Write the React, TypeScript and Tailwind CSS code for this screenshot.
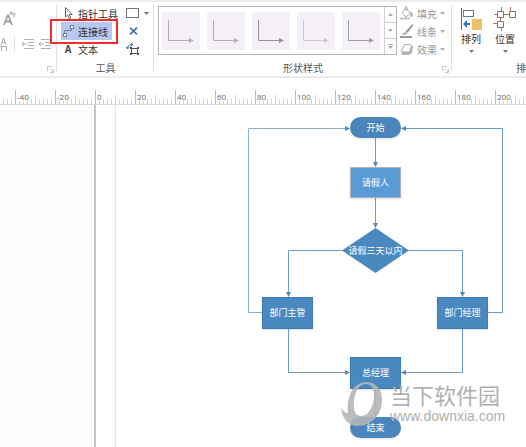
import React from 'react'

interface FlowNode {
  id: string
  label: string
  place: string
}

const nodes: FlowNode[] = [
  { id: 'start', label: '开始', place: 'left-[350px] top-[12px] h-[21px] w-[51px] rounded-full bg-[#4a86bb]' },
  { id: 'applicant', label: '请假人', place: 'left-[350px] top-[62px] h-[31px] w-[51px] border border-[#a9b4bf] bg-[#5b9bd5]' },
  { id: 'director', label: '部门主管', place: 'left-[262px] top-[192px] h-[32px] w-[51px] border border-[#4079ad] bg-[#4a89c0]' },
  { id: 'manager', label: '部门经理', place: 'left-[437px] top-[192px] h-[32px] w-[51px] border border-[#4079ad] bg-[#4a89c0]' },
  { id: 'general', label: '总经理', place: 'left-[350px] top-[252px] h-[32px] w-[51px] border border-[#4079ad] bg-[#4a89c0]' },
  { id: 'end', label: '结束', place: 'left-[350px] top-[312px] h-[21px] w-[51px] rounded-full bg-[#4a86bb]' },
]

const rulerMarks = [-40, -20, 0, 20, 40, 60, 80, 100, 120, 140, 160, 180, 200, 220, 240, 260, 280, 300]

const gallery = [
  { id: 1, stroke: '#b3adb6' },
  { id: 2, stroke: '#b3adb6' },
  { id: 3, stroke: '#96909a' },
  { id: 4, stroke: '#cfc8d2' },
  { id: 5, stroke: '#a39da7' },
]

function Caret({ color = '#777' }: { color?: string }) {
  return (
    <svg width="5" height="3" viewBox="0 0 5 3" className="shrink-0">
      <path d="M0 0h5L2.5 3z" fill={color} />
    </svg>
  )
}

function Launcher() {
  return (
    <button aria-label="更多选项" className="absolute right-[3px] bottom-[3px]">
      <svg width="7" height="7" viewBox="0 0 7 7" fill="none" stroke="#c4c4c4">
        <path d="M.5 5V.5H5M3 3l3 3M6.5 3v3.5H3" />
      </svg>
    </button>
  )
}

function PointerIcon() {
  return (
    <svg width="14" height="14" viewBox="0 0 14 14" fill="#fff" stroke="#666">
      <path d="M4.500 1.500v9.500l2.200-2 1.600 3.700 1.500-.7-1.600-3.500h3z" />
    </svg>
  )
}

function ConnectorIcon() {
  return (
    <svg width="14" height="14" viewBox="0 0 14 14" fill="none" stroke="#6880a8">
      <path d="M3.500 9.500V6.500H10.500V4.500" />
      <rect x="2.500" y="9.500" width="3" height="3" fill="#fff" />
      <rect x="9.500" y="1.500" width="3" height="3" fill="#fff" />
    </svg>
  )
}

function RibbonGroup({ width, label, children }: { width: string; label: string; children: React.ReactNode }) {
  return (
    <section className={`relative flex shrink-0 flex-col ${width}`}>
      <div className="flex h-[58px]">{children}</div>
      <p className="text-center text-[10px] leading-4 text-[#555]">{label}</p>
      <span className="absolute top-[3px] right-0 h-[66px] w-px bg-[#e1e1e1]" />
    </section>
  )
}

function FontGroup() {
  return (
    <RibbonGroup width="w-[57px]" label="">
      <div className="flex flex-col gap-[10px] pt-2">
        <button aria-label="旋转文字" className="pl-[3px]">
          <svg width="14" height="16" viewBox="0 0 14 16" fill="none" stroke="#a0a0a0" strokeWidth="1.800">
            <path d="M1 15l3.600-9.500h.8L9 15M2.500 11.500h5" />
            <path d="M7 3.500c3-1.500 4.500 0 4 4M8 1.500l-1 2 2.500 1.500M9.500 2.500l3 2" strokeWidth="1" />
          </svg>
        </button>
        <div className="flex items-center">
          <button aria-label="字符边框">
            <svg width="8" height="14" viewBox="0 0 8 14" fill="none" stroke="#aaa">
              <path d="M1 8l2.500-7L6 8M2 5.500h3M0 9.500h7M1.500 9v5M6.500 9v5" />
            </svg>
          </button>
          <span className="ml-[6px] h-4 w-px bg-[#dcdcdc]" />
          <button aria-label="减少缩进" className="ml-[6px]">
            <svg width="13" height="10" viewBox="0 0 13 10" fill="none" stroke="#b0b0b0">
              <path d="M3 .5h10M7 3.500h6M7 6.500h6M3 9.500h10M6 5H1M3 3L1 5l2 2" />
            </svg>
          </button>
          <button aria-label="增加缩进" className="ml-[4px]">
            <svg width="13" height="10" viewBox="0 0 13 10" fill="none" stroke="#b0b0b0">
              <path d="M3 .5h10M7 3.500h6M7 6.500h6M3 9.500h10M1 5h5M3 3L1 5l2 2" />
            </svg>
          </button>
        </div>
      </div>
      <Launcher />
    </RibbonGroup>
  )
}

function ToolGroup() {
  return (
    <RibbonGroup width="w-[97px]" label="工具">
      <div className="flex flex-col items-start pt-[2px] pl-1 text-[10px] text-[#333]">
        <button className="flex h-[18px] items-center gap-[3px]">
          <PointerIcon />
          指针工具
        </button>
        <div className="relative">
          <button aria-pressed="true" className="flex h-[18px] w-[51px] items-center gap-[3px] bg-[#b9c6f0]">
            <ConnectorIcon />
            连接线
          </button>
          <span className="pointer-events-none absolute -top-[3px] -right-[6px] -bottom-[4px] -left-[11px] border-2 border-[#f02c2c]" />
        </div>
        <button className="flex h-[18px] items-center gap-[3px]">
          <span className="w-[14px] text-center font-['Liberation_Sans'] font-bold text-[#444]">A</span>
          文本
        </button>
      </div>
      <div className="flex flex-col items-start pt-[2px] pl-2">
        <button aria-label="矩形" className="flex h-[18px] items-center gap-1">
          <svg width="14" height="12" viewBox="0 0 14 12" fill="none" stroke="#777">
            <rect x=".5" y="1.500" width="12" height="9" />
          </svg>
          <Caret />
        </button>
        <button aria-label="连接点" className="flex h-[18px] w-[14px] items-center justify-center">
          <svg width="9" height="8" viewBox="0 0 9 8" fill="none" stroke="#3b6ea8" strokeWidth="1.600">
            <path d="M1 .7l7 6.600M8 .7L1 7.300" />
          </svg>
        </button>
        <button aria-label="文本块" className="flex h-[18px] items-center">
          <svg width="14" height="14" viewBox="0 0 14 14" fill="none">
            <path d="M1.500 7c0-3 1.500-4.500 5-4.500M4.500.5l2.500 2-2.500 2M0 5l1.500 2L3.500 5" stroke="#3b6ea8" />
            <rect x="5.500" y="6.500" width="6" height="5" stroke="#555" />
            <path d="M4 5h2v2H4zM11 5h2v2h-2zM4 11h2v2H4zM11 11h2v2h-2z" fill="#555" />
          </svg>
        </button>
      </div>
    </RibbonGroup>
  )
}

function StyleGroup() {
  return (
    <RibbonGroup width="w-[298px]" label="形状样式">
      <div className="mt-1 ml-1 flex h-[49px] w-[239px] shrink-0 items-stretch border border-[#b4b4b4]">
        <div className="flex flex-1 items-center gap-[7px] pl-[3px]">
          {gallery.map((item) => (
            <button key={item.id} aria-label={`样式 ${item.id}`} className="h-[38px] w-[38px] bg-[#f5f0f7]">
              <svg width="38" height="38" viewBox="0 0 38 38" fill="none">
                <path d="M6.500 8v20.500H28" stroke={item.stroke} />
                <path d="M27 26l5 2.500-5 2.500z" fill={item.stroke} />
              </svg>
            </button>
          ))}
        </div>
        <div className="flex w-[12px] flex-col divide-y divide-[#d0d0d0] border-l border-[#d0d0d0]">
          <button aria-label="上一行" className="flex flex-1 items-center justify-center">
            <span className="rotate-180">
              <Caret color="#aaa" />
            </span>
          </button>
          <button aria-label="下一行" className="flex flex-1 items-center justify-center">
            <Caret color="#aaa" />
          </button>
          <button aria-label="全部样式" className="flex flex-1 flex-col items-center justify-center gap-px">
            <span className="h-px w-[5px] bg-[#aaa]" />
            <Caret color="#aaa" />
          </button>
        </div>
      </div>
      <div className="flex flex-col items-start pt-[2px] pl-[3px] text-[10px] text-[#999]">
        <button className="flex h-[18px] items-center gap-[3px]">
          <svg width="14" height="14" viewBox="0 0 14 14" fill="none" stroke="#aaa">
            <path d="M2 6.500l4.500-4 4 4.500-4.500 4zM5 4V1.500c0-1.300 2-1.300 2 0V5" />
            <path d="M11 6c1.500 2 1.500 4 .5 5-1-1-1-3-.5-5z" fill="#aaa" />
            <path d="M0 12.500h10" stroke="#c4c4c4" strokeWidth="2" />
          </svg>
          填充
          <Caret color="#b0b0b0" />
        </button>
        <button className="flex h-[18px] items-center gap-[3px]">
          <svg width="14" height="14" viewBox="0 0 14 14">
            <path d="M12.500 0L13.500 1 7.500 9 5.500 7.500z" fill="#999" />
            <path d="M5 8l2 1.500c-.5 1.500-3 1.500-5 1.500 1.500-.5 1.500-2.500 3-3z" fill="#aaa" />
            <path d="M0 12h12v2H0z" fill="#999" />
          </svg>
          线条
          <Caret color="#b0b0b0" />
        </button>
        <button className="flex h-[18px] items-center gap-[3px]">
          <svg width="14" height="14" viewBox="0 0 14 14">
            <path d="M4 5l3-2h5l1 2-1 6-3 2H3L1 11z" fill="#b5b5b5" />
            <path d="M4.500 2.500h6l1 1-1.500 5.500-1 1H2.500L1.500 9z" fill="#fff" stroke="#aaa" />
          </svg>
          效果
          <Caret color="#b0b0b0" />
        </button>
      </div>
      <Launcher />
    </RibbonGroup>
  )
}

function ArrangeGroup() {
  return (
    <RibbonGroup width="w-[148px]" label="排列">
      <div className="flex items-start gap-[10px] pt-[5px] pl-[7px] text-[10px] text-[#333]">
        <button className="flex w-6 flex-col items-center">
          <svg width="24" height="24" viewBox="0 0 24 24" fill="none">
            <path d="M2.500 1v22" stroke="#666" />
            <rect x="4.500" y="3.500" width="10" height="6" stroke="#777" fill="#fff" />
            <rect x="13" y="12" width="10" height="11" fill="#f0bf6c" />
            <path d="M4 17l4-4v3h3v2H8v3z" fill="#2f75c0" />
          </svg>
          <span className="leading-4">排列</span>
          <span className="flex h-[6px] items-end">
            <Caret />
          </span>
        </button>
        <button className="flex w-6 flex-col items-center">
          <svg width="24" height="24" viewBox="0 0 24 24" fill="none">
            <path d="M8.500 0v4M17.500 0v4M10 7.500h6M1 7.500h3M7.500 11v3M0 16.500h4M8.500 21v3" stroke="#b8705c" />
            <path d="M4.500 4.500h6v6h-6zM16.500 4.500h6v6h-6zM4.500 14.500h6v6h-6z" stroke="#777" fill="#fff" />
          </svg>
          <span className="leading-4">位置</span>
          <span className="flex h-[6px] items-end">
            <Caret />
          </span>
        </button>
        <div className="flex flex-col gap-[9px] pl-[4px]">
          <button aria-label="置于顶层" className="h-[9px] w-[9px] border border-[#bbb]" />
          <button aria-label="置于底层" className="h-[9px] w-[9px] border border-[#bbb]" />
          <button aria-label="组合" className="h-[9px] w-[9px] border border-[#777]" />
        </div>
      </div>
    </RibbonGroup>
  )
}

function Ruler() {
  return (
    <div className="flex h-[27px] items-end overflow-hidden border-b border-[#dadada] bg-white">
      <svg width="15" height="14" viewBox="25 0 15 14" className="shrink-0" stroke="#d2d2d2">
        <path d="M28.500 9v5M32.500 9v5M36.500 9v5" />
      </svg>
      {rulerMarks.map((mark) => (
        <div key={mark} className="relative h-[14px] w-10 shrink-0">
          <svg width="40" height="14" viewBox="0 0 40 14" stroke="#d2d2d2">
            <path d="M.5 0v14" stroke="#bdbdbd" />
            <path d="M4.500 9v5M8.500 9v5M12.500 9v5M16.500 9v5M20.500 5v9M24.500 9v5M28.500 9v5M32.500 9v5M36.500 9v5" />
          </svg>
          <span className="absolute top-[3px] left-[2px] bg-white font-['Open_Sans'] text-[8px] leading-[8px] text-[#666]">
            {mark}
          </span>
        </div>
      ))}
    </div>
  )
}

function Connectors() {
  return (
    <svg width="526" height="342" viewBox="0 0 526 342" fill="none" className="absolute top-0 left-0">
      <g stroke="#6b9cc8">
        <path d="M262 207.500H248.500V23.500H346" stroke="#86afd2" />
        <path d="M488 207.500H502.500V23.500H405" />
        <path d="M375.500 33V58M375.500 93V119M375.500 284V308" />
        <path d="M343 145.500H288.500V188M408 145.500H462.500V188" />
        <path d="M288.500 224V267.500H346M462.500 224V267.500H405" />
      </g>
      <g fill="#5288b8">
        <path d="M345 21l5 2.500-5 2.500zM406 21l-5 2.500 5 2.500z" />
        <path d="M373 57h5l-2.500 5zM373 118h5l-2.500 5zM373 307h5l-2.500 5z" />
        <path d="M286 187h5l-2.500 5zM460 187h5l-2.500 5z" />
        <path d="M345 265l5 2.500-5 2.500zM406 265l-5 2.500 5 2.500z" />
        <path d="M375.500 123L409 145.500 375.500 168 342 145.500z" fill="#4a89c0" />
      </g>
    </svg>
  )
}

function Watermark() {
  return (
    <div className="absolute top-[276px] left-[341px] flex items-start gap-[7px] text-[#b0b0b0]">
      <svg width="42" height="46" viewBox="0 0 42 46" fill="#b4b6b8" className="opacity-90">
        <path
          fillRule="evenodd"
          d="M25 1C36 1 42 10 41 21 40 34 30 45 17 45 8 45 1 38 0 27 2 30 4 32 7 32 5 15 13 1 25 1zM25 3C17 3 12 14 13 26 13 32 16 35 20 35 28 35 33 24 33 14 33 7 30 3 25 3z"
        />
      </svg>
      <div className="flex flex-col">
        <span className="text-[22px] leading-[26px] whitespace-nowrap">当下软件园</span>
        <span className="font-['Liberation_Sans'] text-[14px] leading-[18px]">www.downxia.com</span>
      </div>
    </div>
  )
}

function Canvas() {
  return (
    <main className="relative flex min-h-[342px] flex-1 overflow-hidden">
      <div className="w-24 shrink-0 border-r-2 border-[#c4c4c4] bg-[#fdfdfd]" />
      <div className="w-5 shrink-0 border-r border-[#e4e4e4] bg-white" />
      <div className="flex-1 bg-white" />
      <Connectors />
      {nodes.map((node) => (
        <div
          key={node.id}
          className={`absolute flex items-center justify-center text-[9px] leading-3 text-white shadow-sm ${node.place}`}
        >
          {node.label}
        </div>
      ))}
      <div className="absolute top-[123px] left-[342px] flex h-[45px] w-[67px] items-center justify-center text-[9px] leading-3 whitespace-nowrap text-white">
        请假三天以内
      </div>
      <Watermark />
    </main>
  )
}

export default function App() {
  return (
    <div
      lang="zh-CN"
      className="flex min-h-screen flex-col overflow-hidden bg-white font-['Noto_Sans_CJK_SC',sans-serif]"
    >
      {/* Ribbon */}
      <header className="flex h-[78px] overflow-hidden border-t-2 border-b-2 border-t-[#eceeee] border-b-[#ebebeb]">
        <FontGroup />
        <ToolGroup />
        <StyleGroup />
        <ArrangeGroup />
      </header>
      <Ruler />
      <Canvas />
    </div>
  )
}
